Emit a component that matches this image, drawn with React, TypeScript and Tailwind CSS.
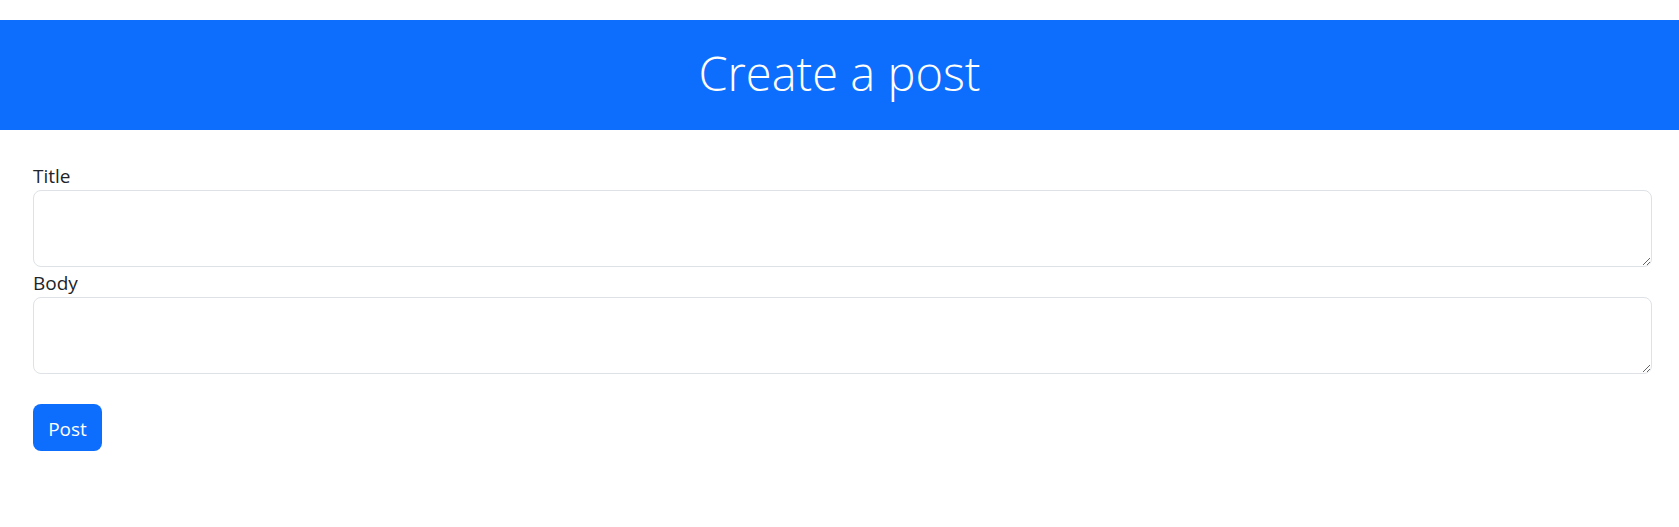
export default function App() {
  return (
    <div className="min-h-screen bg-white pt-5 text-[#212529]" style={{ fontFamily: '"Open Sans", "Noto Sans", sans-serif' }}>
      <div className="flex h-[110px] items-center justify-center bg-[#0d6efd]">
        <h1 className="-mt-1 text-[47px] font-light leading-[1.2] text-white">Create a post</h1>
      </div>
      <form className="pl-[33px] pr-[27px] pt-[30px]" onSubmit={(e) => e.preventDefault()}>
        <label className="block pt-[2px] text-[19px] leading-[28px]">Title</label>
        <textarea
          rows={2}
          className="block h-[77px] w-full rounded-lg border border-[#dee2e6] px-4 py-2 text-[20px] outline-none"
        />
        <label className="block pt-[2px] text-[19px] leading-[28px]">Body</label>
        <textarea
          rows={2}
          className="block h-[77px] w-full rounded-lg border border-[#dee2e6] px-4 py-2 text-[20px] outline-none"
        />
        <button
          type="submit"
          className="mt-[30px] h-[47px] w-[69px] rounded-lg bg-[#0d6efd] pt-[3px] text-[19px] text-white"
        >
          Post
        </button>
      </form>
    </div>
  );
}
